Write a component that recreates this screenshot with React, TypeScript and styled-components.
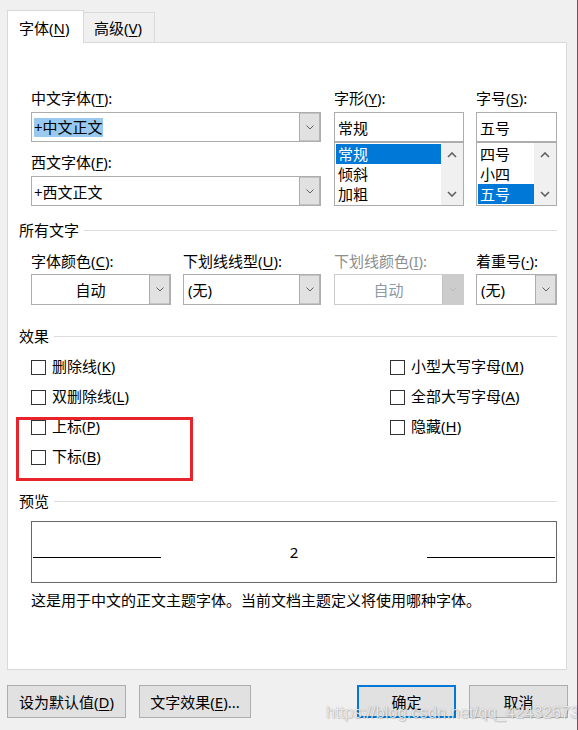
import React from 'react';
import styled, { createGlobalStyle } from 'styled-components';

const GlobalStyle = createGlobalStyle`
  html, body { margin: 0; padding: 0; background: #f0f0f0; }
  body {
    font-family: "Noto Sans", "Noto Sans CJK SC", sans-serif;
    font-size: 15px;
    color: #000;
  }
  * { box-sizing: border-box; }
`;

const Window = styled.div`
  position: relative;
  width: 578px;
  height: 730px;
  background: #f0f0f0;
  overflow: hidden;
  display: flex;
  flex-direction: column;
`;

const EdgeLine = styled.div`
  position: absolute;
  top: 0;
  right: 0;
  width: 1px;
  height: 100%;
  background: #a8336a;
`;

const TabStrip = styled.div`
  height: 42px;
  display: flex;
  align-items: flex-end;
  padding-left: 7px;
  position: relative;
  z-index: 1;
`;

const Tab = styled.div<{ $active?: boolean; $w: number }>`
  width: ${p => p.$w}px;
  height: ${p => (p.$active ? 33 : 30)}px;
  margin-bottom: ${p => (p.$active ? -1 : 0)}px;
  background: ${p => (p.$active ? '#ffffff' : '#f0f0f0')};
  border: 1px solid #d9d9d9;
  border-bottom: none;
  border-left: ${p => (p.$active ? '1px solid #d9d9d9' : 'none')};
  display: flex;
  align-items: flex-end;
  padding-left: ${p => (p.$active ? 11 : 10)}px;
  padding-bottom: ${p => (p.$active ? 5 : 4)}px;
  line-height: 20px;
  white-space: nowrap;
`;

const U = styled.span`
  text-decoration: underline;
  text-underline-offset: 2px;
`;

const Panel = styled.div`
  margin-left: 7px;
  width: 560px;
  height: 628px;
  background: #ffffff;
  border: 1px solid #d9d9d9;
  padding: 0 9px 0 11px;
  display: flex;
  flex-direction: column;
`;

const FieldRow = styled.div<{ $mt: number }>`
  display: flex;
  margin-top: ${p => p.$mt}px;
  padding-left: 12px;
`;

const Field = styled.div<{ $w: number; $ml?: number }>`
  width: ${p => p.$w}px;
  margin-left: ${p => p.$ml ?? 0}px;
  display: flex;
  flex-direction: column;
`;

const Label = styled.div<{ $mb?: number; $mt?: number; $disabled?: boolean }>`
  height: 20px;
  line-height: 20px;
  margin-top: ${p => p.$mt ?? 0}px;
  margin-bottom: ${p => p.$mb ?? 4}px;
  white-space: nowrap;
  color: ${p => (p.$disabled ? '#8e8e8e' : '#000')};
`;

const Combo = styled.div<{ $h?: number; $disabled?: boolean }>`
  display: flex;
  height: ${p => p.$h ?? 30}px;
  border: 1px solid ${p => (p.$disabled ? '#cccccc' : '#adadad')};
  background: #ffffff;
`;

const ComboText = styled.div<{ $center?: boolean; $pl?: number; $disabled?: boolean }>`
  flex: 1;
  display: flex;
  align-items: center;
  justify-content: ${p => (p.$center ? 'center' : 'flex-start')};
  padding-left: ${p => (p.$center ? 0 : p.$pl ?? 2)}px;
  color: ${p => (p.$disabled ? '#8d99a6' : '#000')};
  white-space: nowrap;
`;

const Selected = styled.span`
  background: #99c9ef;
  line-height: 19px;
  height: 19px;
  display: inline-block;
`;

const ComboButton = styled.div<{ $disabled?: boolean }>`
  width: 21px;
  border-left: 1px solid ${p => (p.$disabled ? '#c4c4c4' : '#acacac')};
  background: ${p => (p.$disabled ? '#cccccc' : '#e1e1e1')};
  box-shadow: ${p => (p.$disabled ? 'none' : 'inset -1px 0 #b4b4b4, inset 0 1px #c4c4c4, inset 0 -1px #c4c4c4')};
  display: flex;
  align-items: center;
  justify-content: center;
`;

const TextBox = styled.div`
  height: 30px;
  border: 1px solid #adadad;
  display: flex;
  align-items: center;
  padding-left: 3px;
`;

const ListBox = styled.div`
  display: flex;
  height: 64px;
  border: 1px solid #adadad;
`;

const ListItems = styled.div`
  flex: 1;
  padding: 1px 0 0 1px;
`;

const ListItem = styled.div<{ $sel?: boolean }>`
  height: 20px;
  line-height: 20px;
  padding-left: 2px;
  background: ${p => (p.$sel ? '#0078d7' : 'transparent')};
  color: ${p => (p.$sel ? '#ffffff' : '#000')};
  white-space: nowrap;
`;

const ScrollBar = styled.div`
  width: 22px;
  background: #f0f0f0;
  display: flex;
  flex-direction: column;
  justify-content: space-between;
  align-items: center;
  padding: 9px 0 8px;
`;

const SectionHeader = styled.div<{ $mt: number }>`
  margin-top: ${p => p.$mt}px;
  height: 20px;
  display: flex;
  align-items: center;
  line-height: 20px;
  white-space: nowrap;
`;

const HeaderLine = styled.div`
  flex: 1;
  height: 1px;
  background: #dcdcdc;
  margin-left: 5px;
`;

const Checks = styled.div`
  position: relative;
  margin-top: 6px;
  padding-left: 12px;
  display: flex;
`;

const CheckColumn = styled.div<{ $w?: number }>`
  width: ${p => (p.$w ? `${p.$w}px` : 'auto')};
  display: flex;
  flex-direction: column;
`;

const CheckRow = styled.div`
  height: 30px;
  display: flex;
  align-items: center;
  white-space: nowrap;
`;

const CheckText = styled.span`
  line-height: 20px;
  padding-bottom: 2px;
`;

const CheckBox = styled.div`
  width: 15px;
  height: 15px;
  border: 1px solid #333333;
  background: #ffffff;
  margin-right: 6px;
`;

const Annotation = styled.div`
  position: absolute;
  left: -3px;
  top: 65px;
  width: 177px;
  height: 64px;
  border: 3px solid #e8232c;
  pointer-events: none;
`;

const PreviewBox = styled.div`
  margin-top: 10px;
  margin-left: 12px;
  width: 526px;
  height: 62px;
  border: 1px solid #676767;
  display: flex;
  align-items: center;
  justify-content: space-between;
  padding: 0 1px;
`;

const PreviewLine = styled.div`
  width: 128px;
  height: 1px;
  background: #000;
  margin-top: 11px;
`;

const PreviewText = styled.div`
  line-height: 20px;
  font-size: 15px;
`;

const Description = styled.div`
  margin-top: 7px;
  padding-left: 12px;
  line-height: 20px;
  white-space: nowrap;
`;

const ButtonRow = styled.div`
  margin-top: 15px;
  display: flex;
  padding: 0 10px 0 7px;
`;

const Button = styled.div<{ $w: number; $primary?: boolean; $ml?: number }>`
  width: ${p => p.$w}px;
  height: 33px;
  margin-left: ${p => p.$ml ?? 0}px;
  background: #e1e1e1;
  border: ${p => (p.$primary ? '2px solid #0078d7' : '1px solid #adadad')};
  display: flex;
  align-items: center;
  justify-content: center;
  white-space: nowrap;
`;

const Spacer = styled.div`
  flex: 1;
`;

const Watermark = styled.div`
  position: absolute;
  left: 326px;
  top: 700px;
  font-family: "Liberation Sans", Arial, sans-serif;
  font-size: 16.5px;
  line-height: 24px;
  color: rgba(255, 255, 255, 0.8);
  text-shadow: 0 0 1px rgba(0, 0, 0, 0.35), 1px 1px 1px rgba(0, 0, 0, 0.15);
  white-space: nowrap;
  pointer-events: none;
`;

const Chevron: React.FC<{ color?: string }> = ({ color = '#606060' }) => (
  <svg width="8" height="5" viewBox="0 0 8 5">
    <path d="M0.5 0.5 L4 4 L7.5 0.5" fill="none" stroke={color} strokeWidth="1" />
  </svg>
);

const ScrollArrow: React.FC<{ up?: boolean }> = ({ up }) => (
  <svg width="10" height="6" viewBox="0 0 10 6">
    <path
      d={up ? 'M1 5 L5 1 L9 5' : 'M1 1 L5 5 L9 1'}
      fill="none"
      stroke="#606060"
      strokeWidth="1.6"
    />
  </svg>
);

const SelectCombo: React.FC<{
  children: React.ReactNode;
  center?: boolean;
  pl?: number;
  h?: number;
  disabled?: boolean;
}> = ({ children, center, pl, h, disabled }) => (
  <Combo $h={h} $disabled={disabled}>
    <ComboText $center={center} $pl={pl} $disabled={disabled}>
      {children}
    </ComboText>
    <ComboButton $disabled={disabled}>
      <Chevron color={disabled ? '#b8b8b8' : '#606060'} />
    </ComboButton>
  </Combo>
);

const PickList: React.FC<{ items: string[]; selected: number }> = ({ items, selected }) => (
  <ListBox>
    <ListItems>
      {items.map((it, i) => (
        <ListItem key={it} $sel={i === selected}>
          {it}
        </ListItem>
      ))}
    </ListItems>
    <ScrollBar>
      <ScrollArrow up />
      <ScrollArrow />
    </ScrollBar>
  </ListBox>
);

const Check: React.FC<{ children: React.ReactNode }> = ({ children }) => (
  <CheckRow>
    <CheckBox />
    <CheckText>{children}</CheckText>
  </CheckRow>
);

export default function App() {
  return (
    <>
      <GlobalStyle />
      <Window>
        <TabStrip>
          <Tab $active $w={77}>
            字体(<U>N</U>)
          </Tab>
          <Tab $w={71}>
            高级(<U>V</U>)
          </Tab>
        </TabStrip>
        <Panel>
          <FieldRow $mt={45}>
            <Field $w={290}>
              <Label>
                中文字体(<U>T</U>):
              </Label>
              <SelectCombo>
                <Selected>+中文正文</Selected>
              </SelectCombo>
              <Label $mt={10}>
                西文字体(<U>F</U>):
              </Label>
              <SelectCombo>+西文正文</SelectCombo>
            </Field>
            <Field $w={130} $ml={13}>
              <Label>
                字形(<U>Y</U>):
              </Label>
              <TextBox>常规</TextBox>
              <PickList items={['常规', '倾斜', '加粗']} selected={0} />
            </Field>
            <Field $w={81} $ml={12}>
              <Label>
                字号(<U>S</U>):
              </Label>
              <TextBox>五号</TextBox>
              <PickList items={['四号', '小四', '五号']} selected={2} />
            </Field>
          </FieldRow>

          <SectionHeader $mt={14}>
            所有文字
            <HeaderLine />
          </SectionHeader>

          <FieldRow $mt={11}>
            <Field $w={140}>
              <Label $mb={3}>
                字体颜色(<U>C</U>):
              </Label>
              <SelectCombo center h={31}>
                自动
              </SelectCombo>
            </Field>
            <Field $w={138} $ml={12}>
              <Label $mb={3}>
                下划线线型(<U>U</U>):
              </Label>
              <SelectCombo pl={4} h={31}>
                (无)
              </SelectCombo>
            </Field>
            <Field $w={130} $ml={13}>
              <Label $mb={3} $disabled>
                下划线颜色(<U>I</U>):
              </Label>
              <SelectCombo center h={31} disabled>
                自动
              </SelectCombo>
            </Field>
            <Field $w={81} $ml={12}>
              <Label $mb={3}>
                着重号(<U>·</U>):
              </Label>
              <SelectCombo pl={4} h={31}>
                (无)
              </SelectCombo>
            </Field>
          </FieldRow>

          <SectionHeader $mt={21}>
            效果
            <HeaderLine />
          </SectionHeader>

          <Checks>
            <CheckColumn $w={359}>
              <Check>
                删除线(<U>K</U>)
              </Check>
              <Check>
                双删除线(<U>L</U>)
              </Check>
              <Check>
                上标(<U>P</U>)
              </Check>
              <Check>
                下标(<U>B</U>)
              </Check>
            </CheckColumn>
            <CheckColumn>
              <Check>
                小型大写字母(<U>M</U>)
              </Check>
              <Check>
                全部大写字母(<U>A</U>)
              </Check>
              <Check>
                隐藏(<U>H</U>)
              </Check>
            </CheckColumn>
            <Annotation />
          </Checks>

          <SectionHeader $mt={19}>
            预览
            <HeaderLine />
          </SectionHeader>

          <PreviewBox>
            <PreviewLine />
            <PreviewText>2</PreviewText>
            <PreviewLine />
          </PreviewBox>

          <Description>这是用于中文的正文主题字体。当前文档主题定义将使用哪种字体。</Description>
        </Panel>

        <ButtonRow>
          <Button $w={119}>
            设为默认值(<U>D</U>)
          </Button>
          <Button $w={112} $ml={13}>
            文字效果(<U>E</U>)...
          </Button>
          <Spacer />
          <Button $w={99} $primary>
            确定
          </Button>
          <Button $w={99} $ml={13}>
            取消
          </Button>
        </ButtonRow>

        <Watermark>https://blog.csdn.net/qq_42432673</Watermark>
        <EdgeLine />
      </Window>
    </>
  );
}
